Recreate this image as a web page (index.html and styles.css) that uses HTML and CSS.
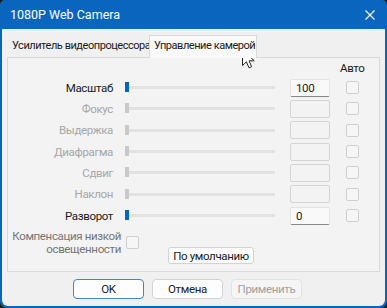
FILE: index.html
```html
<!DOCTYPE html>
<html lang="ru">
<head>
  <meta charset="UTF-8" />
  <title>1080P Web Camera</title>
  <link rel="stylesheet" href="styles.css">
</head>
<body>
  <div class="window">
    <div class="titlebar">
      <span class="title">1080P Web Camera</span>
      <svg class="close" width="10" height="10" viewBox="0 0 10 10">
        <path d="M0.5 0.5 L9.5 9.5 M9.5 0.5 L0.5 9.5" stroke="#fff" stroke-width="1.1" fill="none"/>
      </svg>
    </div>

    <div class="client">
      <div class="tabs">
        <div class="tab">Усилитель видеопроцессора</div>
        <div class="tab active">Управление камерой</div>
      </div>

      <div class="panel">
        <div class="grid">
          <div></div><div></div><div></div>
          <div class="auto-head">Авто</div>

          <div class="lbl">Масштаб</div>
          <div class="slider"><span class="thumb on"></span></div>
          <div class="field on">100</div>
          <span class="check"></span>

          <div class="lbl off">Фокус</div>
          <div class="slider"><span class="thumb"></span></div>
          <div class="field"></div>
          <span class="check"></span>

          <div class="lbl off">Выдержка</div>
          <div class="slider"><span class="thumb"></span></div>
          <div class="field"></div>
          <span class="check"></span>

          <div class="lbl off">Диафрагма</div>
          <div class="slider"><span class="thumb"></span></div>
          <div class="field"></div>
          <span class="check"></span>

          <div class="lbl off">Сдвиг</div>
          <div class="slider"><span class="thumb"></span></div>
          <div class="field"></div>
          <span class="check"></span>

          <div class="lbl off">Наклон</div>
          <div class="slider"><span class="thumb"></span></div>
          <div class="field"></div>
          <span class="check"></span>

          <div class="lbl">Разворот</div>
          <div class="slider"><span class="thumb on"></span></div>
          <div class="field on">0</div>
          <span class="check"></span>
        </div>

        <div class="comp-row">
          <div class="comp-lbl">Компенсация низкой<br>освещенности</div>
          <span class="check"></span>
          <button class="btn small">По умолчанию</button>
        </div>
      </div>

      <div class="buttons">
        <button class="btn default">OK</button>
        <button class="btn">Отмена</button>
        <button class="btn disabled">Применить</button>
      </div>
    </div>

    <svg class="cursor" width="14" height="20" viewBox="0 0 14 20">
      <path d="M0.5 0.5 L0.5 16.5 L4.4 12.8 L7 18.8 L9.6 17.7 L7.1 11.8 L12.2 11.8 Z" fill="#fff" stroke="#222" stroke-width="1"/>
    </svg>
  </div>
</body>
</html>
```

FILE: styles.css
```css
* { box-sizing: border-box; }
body {
  margin: 0;
  background: #1c1c1c;
  font-family: Roboto, 'Liberation Sans', sans-serif;
  font-size: 11.5px;
  letter-spacing: -0.35px;
  color: #1a1a1a;
}
.window {
  position: relative;
  width: 387px;
  height: 308px;
  background: #0a65be;
  border-radius: 5px 5px 7px 7px;
  padding: 0 2px 2px;
  display: flex;
  flex-direction: column;
  overflow: hidden;
}
.titlebar {
  height: 29px;
  display: flex;
  align-items: center;
  justify-content: space-between;
  padding: 0 10px 0 8px;
  color: #fff;
  letter-spacing: 0;
}
.title { font-size: 12.5px; }
.client {
  flex: 1;
  background: #f0f0f0;
  padding: 6px 5px 0;
  border-radius: 0 0 6px 6px;
}
.tabs {
  display: flex;
  align-items: flex-end;
  height: 22px;
  position: relative;
  z-index: 1;
  font-size: 11px;
  letter-spacing: -0.45px;
}
.tab {
  height: 20px;
  line-height: 18px;
  padding: 0 4px 0 5px;
  width: 142px;
  white-space: nowrap;
}
.tab.active {
  width: 108px;
  height: 23px;
  line-height: 20px;
  margin-bottom: -1px;
  background: #f9f9f9;
  border: 1px solid #d9d9d9;
  border-bottom: none;
  padding: 0 4px;
}
.panel {
  height: 215px;
  border: 1px solid #d9d9d9;
  background: #f3f3f3;
}
.grid {
  display: grid;
  grid-template-columns: 105px 150px 43px 20px;
  grid-template-rows: 19px;
  grid-auto-rows: 21.33px;
  column-gap: 12px;
  align-items: center;
}
.grid > :nth-child(4n+3) { margin-left: 3px; }
.grid > :nth-child(4n) { margin-left: 4px; }
.auto-head { margin-left: -2px !important; }
.lbl { text-align: right; white-space: nowrap; }
.lbl.off { color: #a6a6a6; }
.slider {
  position: relative;
  height: 3px;
  background: #e2e2e2;
}
.thumb {
  position: absolute;
  left: 0;
  top: -4px;
  width: 4px;
  height: 10px;
  background: #c9c9c9;
}
.thumb.on { background: #0067c0; }
.field {
  height: 18px;
  border: 1px solid #d4d4d4;
  border-radius: 2px;
  padding-left: 5px;
  line-height: 16px;
}
.field.on {
  background: #f9f9f9;
  border-color: #e3e3e3;
  border-bottom-color: #878787;
}
.check {
  display: block;
  flex: none;
  width: 13px;
  height: 13px;
  border: 1px solid #cfcfcf;
  border-radius: 2px;
  background: #f6f6f6;
}
.comp-row {
  display: flex;
  align-items: flex-start;
  margin-top: 4px;
}
.comp-lbl {
  flex: none;
  width: 113px;
  text-align: right;
  line-height: 13px;
  white-space: nowrap;
  color: #757575;
}
.comp-row .check { margin: 6px 0 0 5px; }
.btn {
  font: inherit;
  letter-spacing: -0.35px;
  color: #1a1a1a;
  background: #fdfdfd;
  border: 1px solid #d3d3d3;
  border-radius: 4px;
  height: 20px;
  width: 71px;
  padding: 0;
}
.btn.small {
  width: 86px;
  height: 17px;
  line-height: 14px;
  margin: 17px 0 0 29px;
  border-radius: 3px;
}
.btn.default { border-color: #3a86d0; }
.btn.disabled { color: #a0a0a0; background: #f5f5f5; border-color: #e2e2e2; }
.buttons {
  display: flex;
  gap: 8px;
  margin-top: 7px;
  padding-left: 66px;
}
.cursor {
  position: absolute;
  left: 242px;
  top: 49px;
}
```
